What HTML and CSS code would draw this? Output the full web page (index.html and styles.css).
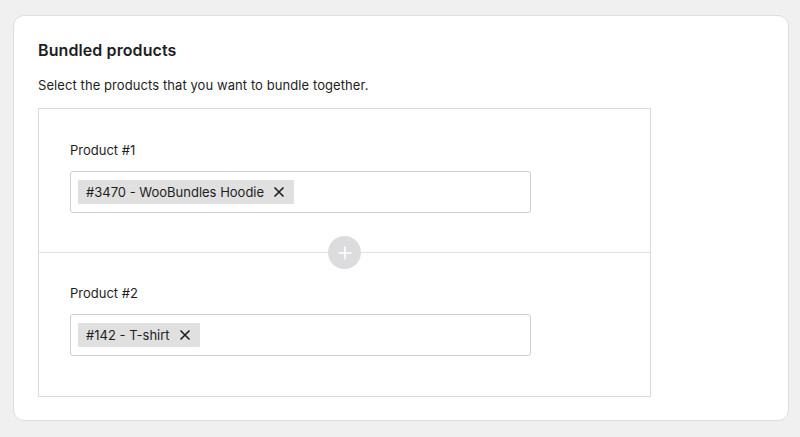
FILE: index.html
```html
<!DOCTYPE html>
<html>
<head>
<meta charset="utf-8">
<link rel="stylesheet" href="styles.css">
</head>
<body>
<div class="card">
  <h2 class="title">Bundled products</h2>
  <p class="desc">Select the products that you want to bundle together.</p>
  <div class="bundle">
    <div class="item">
      <div class="label">Product #1</div>
      <div class="field">
        <span class="token">#3470 - WooBundles Hoodie
          <svg class="x" viewBox="0 0 12 12" width="12" height="12"><path d="M1.5 1.5l9 9M10.5 1.5l-9 9" stroke="#1e1e1e" stroke-width="1.6" fill="none"/></svg>
        </span>
      </div>
    </div>
    <div class="divider">
      <span class="add"><svg viewBox="0 0 16 16" width="16" height="16"><path d="M8 1.5v13M1.5 8h13" stroke="#fff" stroke-width="1.6" fill="none"/></svg></span>
    </div>
    <div class="item item-last">
      <div class="label">Product #2</div>
      <div class="field">
        <span class="token">#142 - T-shirt
          <svg class="x" viewBox="0 0 12 12" width="12" height="12"><path d="M1.5 1.5l9 9M10.5 1.5l-9 9" stroke="#1e1e1e" stroke-width="1.6" fill="none"/></svg>
        </span>
      </div>
    </div>
  </div>
</div>
</body>
</html>
```
FILE: styles.css
```css
html, body {
  margin: 0;
  padding: 0;
  background: #f0f0f0;
  font-family: Inter, "Open Sans", "Liberation Sans", sans-serif;
  color: #1e1e1e;
}
body {
  padding: 15px 11px 16px 13px;
}
.card {
  background: #fff;
  border: 1px solid #dedede;
  border-radius: 11px;
  padding: 23px 24px 24px 24px;
  height: 406px;
  box-sizing: border-box;
}
.title {
  margin: 0;
  font-size: 16px;
  font-weight: 600;
  line-height: 22px;
  letter-spacing: 0.1px;
}
.desc {
  margin: 15px 0 0;
  font-size: 13px;
  line-height: 18px;
  letter-spacing: 0.08px;
}
.bundle {
  margin-top: 14px;
  width: 613px;
  box-sizing: border-box;
  border: 1px solid #d8dcde;
}
.item {
  padding: 31px 31px 39px;
}
.item-last {
  padding-top: 30px;
  padding-bottom: 40px;
}
.label {
  font-size: 13px;
  line-height: 20px;
  margin-bottom: 11px;
}
.field {
  width: 461px;
  height: 42px;
  box-sizing: border-box;
  border: 1px solid #cfcfd1;
  border-radius: 3px;
  padding: 8px 7px;
  display: flex;
  align-items: center;
}
.token {
  display: inline-flex;
  align-items: center;
  gap: 9px;
  height: 24px;
  background: #e0e0e0;
  padding: 0 9px 0 8px;
  font-size: 13px;
  border-radius: 1px;
}
.x { display: block; width: 12px; height: 12px; }
.divider {
  height: 1px;
  background: #dfe2e4;
  position: relative;
}
.add {
  position: absolute;
  left: 289px;
  top: -16px;
  width: 33px;
  height: 33px;
  border-radius: 50%;
  background: #dcdcde;
  display: flex;
  align-items: center;
  justify-content: center;
}
```
